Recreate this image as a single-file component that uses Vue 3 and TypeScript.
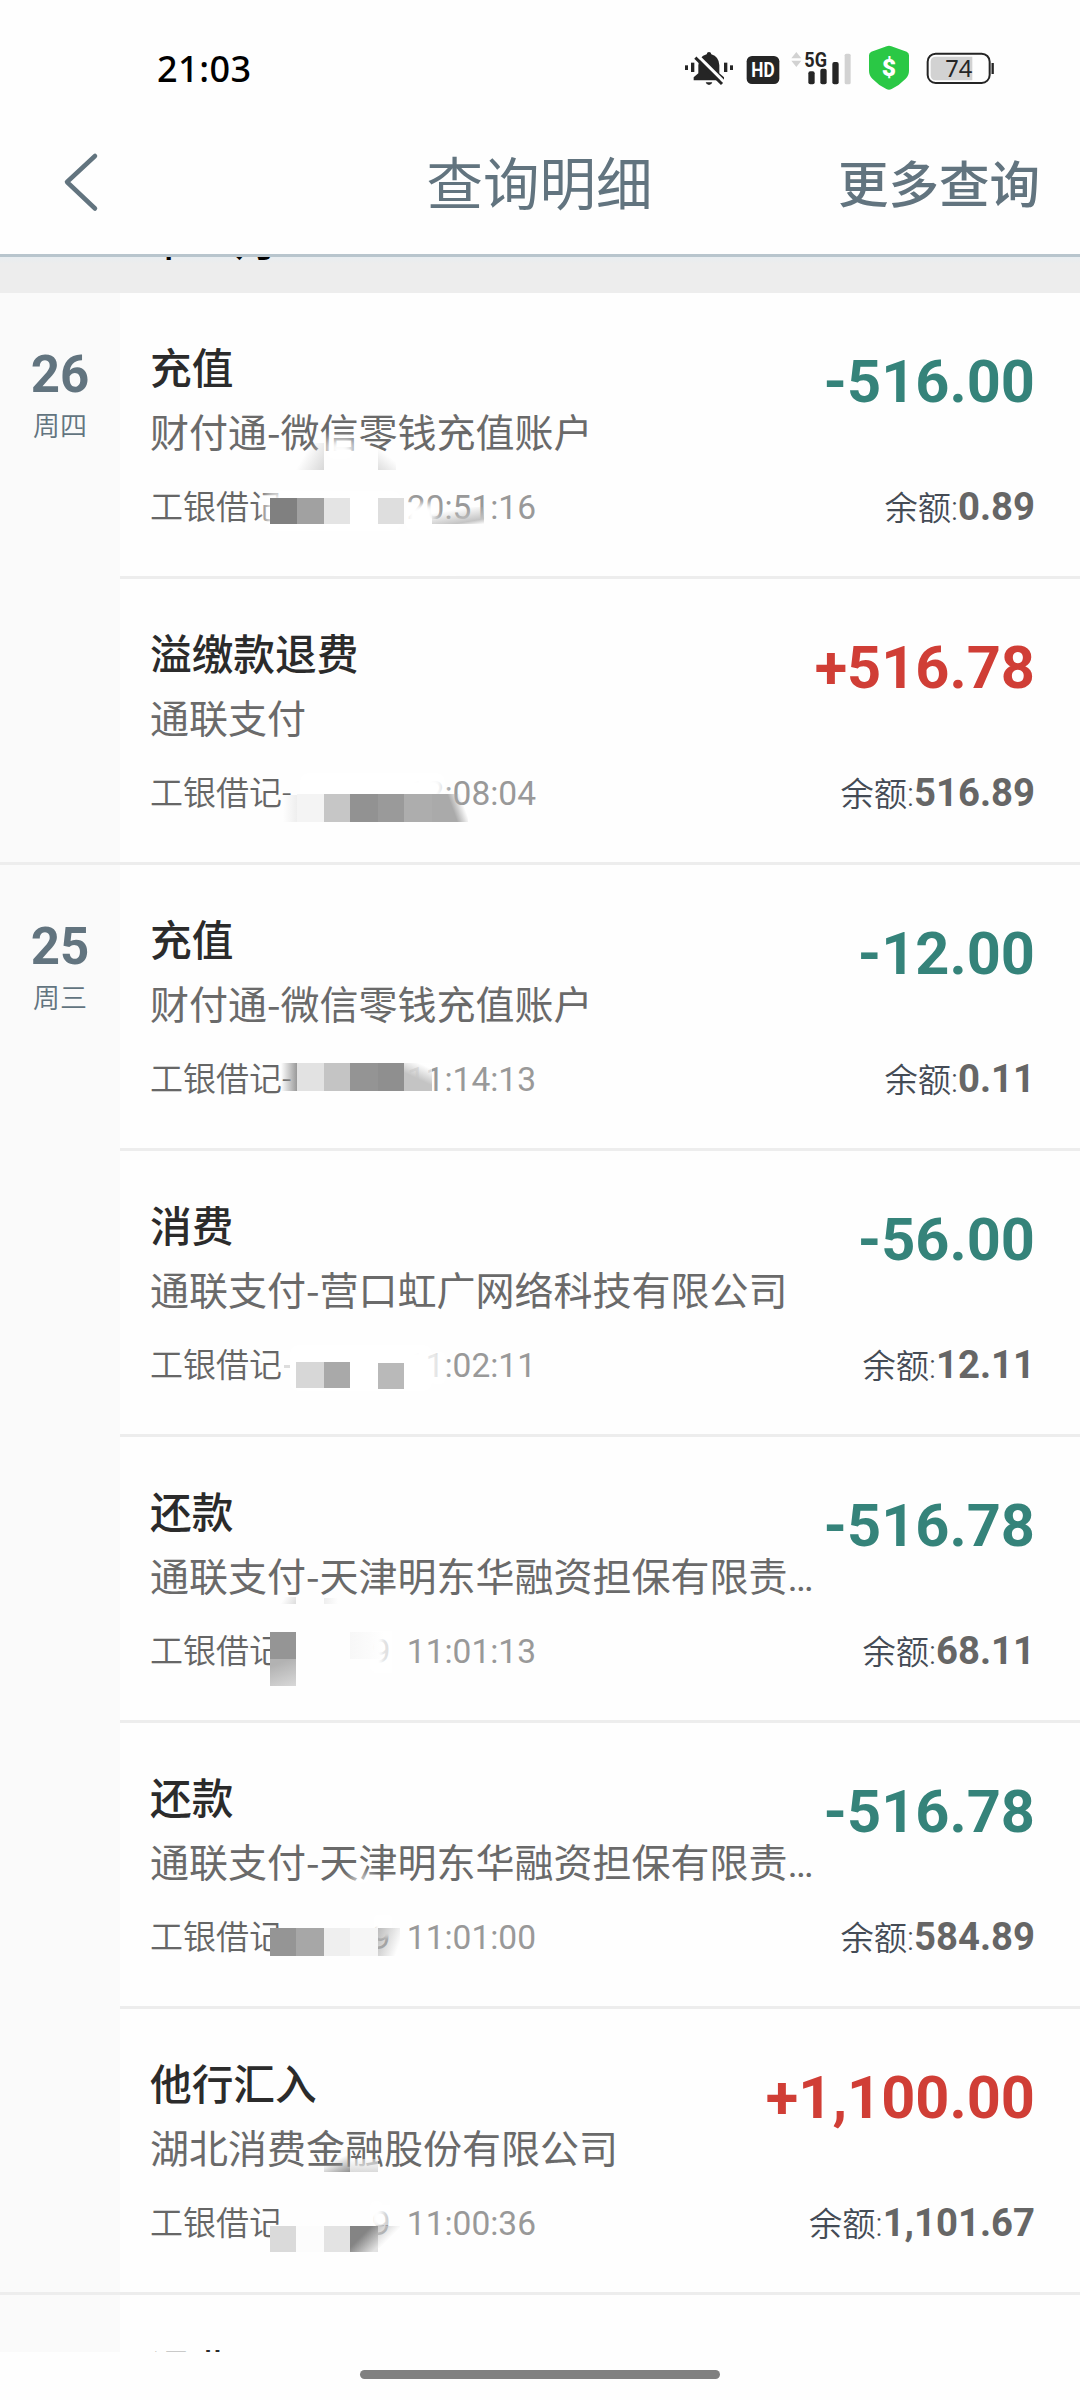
<script setup lang="ts">
interface Patch {
  x: number
  y: number
  w: number
  h: number
  bg: string
  blur?: number
}
interface Entry {
  title: string
  desc: string
  cut?: boolean
  card: string
  time: string
  amount: string
  balance: string
  patches: Patch[]
}
interface Day {
  day: string
  week: string
  entries: Entry[]
}

const days: Day[] = [
  {
    day: '26',
    week: '周四',
    entries: [
      {
        title: '充值', desc: '财付通-微信零钱充值账户', card: '工银借记', time: '20:51:16',
        amount: '-516.00', balance: '0.89',
        patches: [
          { x: 266, y: 198, w: 136, h: 40, bg: '#fff', blur: 6 },
          { x: 326, y: 146, w: 28, h: 20, bg: '#fff', blur: 5 },
          { x: 406, y: 211, w: 30, h: 26, bg: '#fff', blur: 3 },
          { x: 270, y: 205, w: 27, h: 26, bg: '#808080' },
          { x: 297, y: 205, w: 27, h: 26, bg: '#a1a1a1' },
          { x: 324, y: 205, w: 26, h: 26, bg: '#e4e4e4' },
          { x: 378, y: 205, w: 26, h: 26, bg: '#dedede' },
          { x: 432, y: 214, w: 52, h: 17, bg: 'linear-gradient(170deg, transparent 25%, #c4c4c4 80%, transparent 100%)' },
          { x: 296, y: 150, w: 28, h: 27, bg: 'linear-gradient(120deg, transparent 35%, #d8d8d8)' },
          { x: 378, y: 157, w: 18, h: 20, bg: 'linear-gradient(220deg, transparent 35%, #dedede)' },
          { x: 320, y: 280, w: 150, h: 8, bg: '#fff', blur: 6 },
        ],
      },
      {
        title: '溢缴款退费', desc: '通联支付', card: '工银借记-', time: '12:08:04',
        amount: '+516.78', balance: '516.89',
        patches: [
          { x: 300, y: 194, w: 145, h: 46, bg: '#fff', blur: 5 },
          { x: 283, y: 216, w: 14, h: 27, bg: 'linear-gradient(90deg, transparent, #eee)' },
          { x: 297, y: 215, w: 27, h: 28, bg: '#f4f4f4' },
          { x: 324, y: 215, w: 26, h: 28, bg: '#c6c6c6' },
          { x: 350, y: 215, w: 28, h: 28, bg: '#929292' },
          { x: 378, y: 215, w: 26, h: 28, bg: '#9a9a9a' },
          { x: 404, y: 215, w: 28, h: 28, bg: '#adadad' },
          { x: 432, y: 215, w: 36, h: 28, bg: 'linear-gradient(70deg, #aaa 55%, transparent 82%)' },
        ],
      },
    ],
  },
  {
    day: '25',
    week: '周三',
    entries: [
      {
        title: '充值', desc: '财付通-微信零钱充值账户', card: '工银借记-', time: '11:14:13',
        amount: '-12.00', balance: '0.11',
        patches: [
          { x: 281, y: 198, w: 16, h: 28, bg: 'linear-gradient(90deg, transparent, #999)' },
          { x: 297, y: 198, w: 27, h: 28, bg: '#e2e2e2' },
          { x: 324, y: 198, w: 26, h: 28, bg: '#c4c4c4' },
          { x: 350, y: 198, w: 28, h: 28, bg: '#949494' },
          { x: 378, y: 198, w: 26, h: 28, bg: '#8f8f8f' },
          { x: 404, y: 198, w: 28, h: 28, bg: 'linear-gradient(25deg, #c4c4c4 45%, rgba(255,255,255,.7) 85%)' },
        ],
      },
      {
        title: '消费', desc: '通联支付-营口虹广网络科技有限公司', card: '工银借记', time: '11:02:11',
        amount: '-56.00', balance: '12.11',
        patches: [
          { x: 290, y: 194, w: 142, h: 46, bg: '#fff', blur: 5 },
          { x: 430, y: 200, w: 16, h: 34, bg: 'rgba(255,255,255,.7)', blur: 2 },
          { x: 284, y: 214, w: 6, h: 3, bg: '#ddd' },
          { x: 296, y: 211, w: 28, h: 26, bg: '#d7d7d7' },
          { x: 324, y: 211, w: 26, h: 26, bg: '#a9a9a9' },
          { x: 378, y: 212, w: 26, h: 26, bg: '#b9b9b9' },
        ],
      },
      {
        title: '还款', desc: '通联支付-天津明东华融资担保有限责', cut: true, card: '工银借记', time: '9 11:01:13',
        amount: '-516.78', balance: '68.11',
        patches: [
          { x: 370, y: 194, w: 12, h: 40, bg: '#fff', blur: 2 },
          { x: 374, y: 194, w: 18, h: 42, bg: 'rgba(255,255,255,.7)' },
          { x: 350, y: 195, w: 34, h: 27, bg: 'linear-gradient(90deg, #f7f7f7, transparent)' },
          { x: 270, y: 195, w: 26, h: 27, bg: '#959595' },
          { x: 270, y: 222, w: 26, h: 27, bg: 'linear-gradient(160deg, #b2b2b2 20%, #d8d8d8)' },
          { x: 276, y: 160, w: 20, h: 7, bg: 'linear-gradient(120deg, transparent 35%, #ddd)' },
          { x: 324, y: 161, w: 14, h: 6, bg: 'linear-gradient(90deg, #eee, transparent)' },
        ],
      },
      {
        title: '还款', desc: '通联支付-天津明东华融资担保有限责', cut: true, card: '工银借记', time: '9 11:01:00',
        amount: '-516.78', balance: '584.89',
        patches: [
          { x: 374, y: 192, w: 18, h: 22, bg: '#fff', blur: 2 },
          { x: 350, y: 150, w: 24, h: 14, bg: 'rgba(255,255,255,.6)', blur: 4 },
          { x: 270, y: 205, w: 26, h: 28, bg: '#959595' },
          { x: 296, y: 205, w: 28, h: 28, bg: '#a7a7a7' },
          { x: 324, y: 205, w: 26, h: 28, bg: '#efefef' },
          { x: 350, y: 205, w: 28, h: 28, bg: '#f6f6f6' },
          { x: 378, y: 205, w: 22, h: 28, bg: 'linear-gradient(110deg, rgba(175,175,175,.85), transparent 85%)' },
        ],
      },
      {
        title: '他行汇入', desc: '湖北消费金融股份有限公司', card: '工银借记', time: '9 11:00:36',
        amount: '+1,100.00', balance: '1,101.67',
        patches: [
          { x: 370, y: 192, w: 13, h: 26, bg: '#fff', blur: 3 },
          { x: 374, y: 196, w: 16, h: 20, bg: 'rgba(255,255,255,.5)' },
          { x: 270, y: 217, w: 26, h: 26, bg: '#dadada' },
          { x: 296, y: 217, w: 28, h: 26, bg: '#fcfcfc' },
          { x: 324, y: 217, w: 26, h: 26, bg: '#e3e3e3' },
          { x: 350, y: 217, w: 28, h: 26, bg: 'linear-gradient(135deg, #848484 40%, #e2e2e2 90%)' },
          { x: 378, y: 217, w: 22, h: 22, bg: 'linear-gradient(135deg, #c8c8c8, transparent 55%)' },
          { x: 324, y: 146, w: 26, h: 17, bg: 'linear-gradient(155deg, transparent 35%, #909090)' },
          { x: 350, y: 150, w: 28, h: 13, bg: 'linear-gradient(180deg, rgba(255,255,255,.5), #dadada)' },
        ],
      },
    ],
  },
]

const box = (p: Patch) => ({
  left: p.x - 120 + 'px',
  top: p.y + 'px',
  width: p.w + 'px',
  height: p.h + 'px',
  background: p.bg,
  filter: p.blur ? `blur(${p.blur}px)` : 'none',
})
</script>

<template>
  <div class="screen">
    <div class="status">
      <span class="clock">21:03</span>
      <div class="icons">
        <svg width="60" height="50" viewBox="72 39 180 150">
          <g fill="#252525">
            <rect x="75" y="106" width="9" height="14" /><rect x="93" y="98" width="10" height="28" />
            <rect x="192" y="98" width="10" height="28" /><rect x="210" y="106" width="9" height="14" />
            <path d="M140 73 Q141 66 147 66 Q153 66 154 73 Q177 80 178 106 V130 L192 142 V151 H101 V142 L115 130 V106 Q116 80 140 73Z" />
            <path d="M137 157 H157 Q155 165 147 165 Q139 165 137 157Z" />
          </g>
          <path d="M112 76 L194 158" stroke="#fff" stroke-width="10" />
          <path d="M106 83 L186 162" stroke="#252525" stroke-width="9" />
        </svg>
        <svg width="46" height="50" viewBox="252 39 138 150">
          <rect x="260" y="78" width="98" height="84" rx="16" fill="#252525" />
          <text x="309" y="142" text-anchor="middle" textLength="70" lengthAdjust="spacingAndGlyphs" font-family="Roboto, sans-serif" font-weight="700" font-size="60" fill="#fff">HD</text>
        </svg>
        <svg width="74" height="50" viewBox="390 39 222 150">
          <path d="M409 66 L424 85 H394Z M409 111 L424 92 H394Z" fill="#d2d2d2" />
          <g fill="#252525">
            <rect x="445" y="124" width="19" height="39" rx="6" /><rect x="481" y="116" width="19" height="47" rx="6" />
            <rect x="517" y="96" width="19" height="67" rx="6" />
          </g>
          <rect x="554" y="71" width="18" height="92" rx="5" fill="#d2d2d2" />
          <text x="433" y="110" textLength="68" lengthAdjust="spacingAndGlyphs" font-family="Roboto, sans-serif" font-weight="700" font-size="60" fill="#252525" stroke="#fff" stroke-width="6" paint-order="stroke">5G</text>
        </svg>
        <svg width="56" height="50" viewBox="612 39 168 150">
          <path d="M680 49 Q687 46 694 49 L740 65 Q747 68 747 76 V122 Q747 136 737 146 Q718 166 695 177 Q687 181 679 177 Q656 166 637 146 Q627 136 627 122 V76 Q627 68 634 65Z" fill="#2ac845" />
          <text x="687" y="139" text-anchor="middle" font-family="Roboto, sans-serif" font-weight="900" font-size="74" fill="#fff">$</text>
        </svg>
        <svg width="80" height="50" viewBox="780 39 240 150">
          <path d="M828 80 H937 V151 H828 Q812 151 812 136 V95 Q812 80 828 80Z" fill="#d2d2d2" />
          <rect x="803" y="71" width="186" height="88" rx="24" fill="none" stroke="#252525" stroke-width="6" />
          <path d="M998 99 V132" stroke="#252525" stroke-width="7" />
          <text x="896" y="140" text-anchor="middle" font-family="'Noto Sans', sans-serif" font-size="71" fill="#252525">74</text>
        </svg>
      </div>
    </div>

    <header class="nav">
      <svg class="back" width="40" height="62" viewBox="0 0 40 62">
        <path d="M33 5 L5 31 L33 57.500" fill="none" stroke="#62747f" stroke-width="4.500" stroke-linecap="round" stroke-linejoin="round" />
      </svg>
      <h1>查询明细</h1>
      <span class="more">更多查询</span>
    </header>

    <div class="list">
      <div class="month"><span>2026年02月</span></div>
      <section v-for="d in days" :key="d.day" class="group">
        <aside class="date">
          <b>{{ d.day }}</b>
          <span>{{ d.week }}</span>
        </aside>
        <div class="entries">
          <article v-for="(e, i) in d.entries" :key="i" class="entry">
            <div class="main">
              <div class="title">{{ e.title }}</div>
              <div class="desc">{{ e.desc }}<i v-if="e.cut">…</i></div>
              <div class="meta"><span class="card">{{ e.card }}</span><span class="time">{{ e.time }}</span></div>
            </div>
            <div class="side">
              <div class="amount" :class="{ income: e.amount[0] === '+' }">{{ e.amount }}</div>
              <div class="balance">余额:<b>{{ e.balance }}</b></div>
            </div>
            <div v-for="(p, j) in e.patches" :key="j" class="patch" :style="box(p)"></div>
          </article>
        </div>
      </section>
      <section class="group">
        <aside class="date"></aside>
        <div class="entries"><article class="entry"><div class="main"><div class="title">退费</div></div></article></div>
      </section>
    </div>

    <footer class="home"><div></div></footer>
  </div>
</template>

<style>
body {
  margin: 0;
  background: #fff;
}
</style>

<style scoped>
.screen {
  width: 1080px;
  height: 2400px;
  display: flex;
  flex-direction: column;
  overflow: hidden;
  background: #fefefe;
  font-family: Roboto, "Noto Sans CJK SC", sans-serif;
}
.status {
  flex: none;
  height: 114px;
  display: flex;
  justify-content: space-between;
  padding: 0 80px 0 157px;
}
.clock {
  padding-top: 44px;
  font: 500 36px/50px "Noto Sans", sans-serif;
  letter-spacing: 0.500px;
  color: #000;
}
.icons {
  display: flex;
  padding-top: 43px;
}
.icons svg {
  display: block;
}
.nav {
  flex: none;
  box-sizing: border-box;
  height: 143px;
  border-bottom: 3px solid #b8c5cd;
  display: grid;
  grid-template-columns: 1fr auto 1fr;
  align-items: center;
  padding: 0 40px 0 62px;
  color: #62747f;
  position: relative;
  z-index: 2;
  background: #fefefe;
}
.back {
  display: block;
  margin-top: -5px;
}
.nav h1 {
  margin: 4px 0 0 -23px;
  font-size: 56.500px;
  font-weight: 400;
  line-height: 80px;
}
.more {
  margin-top: 4px;
  justify-self: end;
  font-size: 50.500px;
  font-weight: 500;
  line-height: 80px;
}
.list {
  flex: none;
  height: 2095px;
  overflow: hidden;
}
.month {
  height: 36px;
  background: linear-gradient(180deg, #e8edf0 0, #ededed 7px);
  font-size: 42px;
  font-weight: 500;
  line-height: 50px;
  color: #000;
  padding-left: 50px;
}
.month span {
  display: block;
  transform: translateY(-40px);
}
.group {
  display: flex;
  border-bottom: 3px solid #ededed;
}
.date {
  width: 120px;
  background: #fafafa;
  display: flex;
  flex-direction: column;
  align-items: center;
  color: #62747f;
}
.date b {
  font-size: 51px;
  line-height: 60px;
  margin-top: 52px;
}
.date span {
  font-size: 27px;
  line-height: 40px;
  margin-top: 2px;
  font-weight: 350;
}
.entries {
  flex: 1;
  min-width: 0;
}
.entry {
  height: 283px;
  position: relative;
  display: flex;
  justify-content: space-between;
  padding: 0 45px 0 30px;
}
.entry + .entry {
  border-top: 3px solid #ededed;
}
.main {
  white-space: nowrap;
  width: 520px;
}
.title {
  margin-top: 47px;
  height: 60px;
  font-size: 41.700px;
  font-weight: 500;
  line-height: 60px;
  color: #2b2b2b;
}
.desc {
  height: 60px;
  font: 400 39px/60px "Noto Sans CJK SC", sans-serif;
  color: #6a6a6a;
}
.desc i {
  font-family: Roboto, sans-serif;
  font-style: normal;
}
.meta {
  margin-top: 23px;
  width: 386px;
  display: flex;
  justify-content: space-between;
  font-size: 33px;
  line-height: 50px;
  color: #666;
  font-weight: 350;
}
.time {
  color: #999;
  font-weight: 400;
  font-size: 33.500px;
  white-space: pre;
  word-spacing: 8px;
}
.side {
  text-align: right;
  white-space: nowrap;
}
.amount {
  margin-top: 54px;
  height: 70px;
  font-size: 59.500px;
  line-height: 70px;
  font-weight: 700;
  color: #35837a;
}
.amount.income {
  color: #d03e36;
}
.balance {
  margin-top: 65px;
  font-size: 33.300px;
  line-height: 50px;
  font-weight: 350;
  color: #444b55;
}
.balance b {
  font-size: 38.300px;
  font-weight: 700;
  color: #666;
}
.patch {
  position: absolute;
}
.home {
  flex: 1;
  background: #fefefe;
  display: flex;
  justify-content: center;
}
.home div {
  width: 360px;
  height: 9px;
  margin-top: 18px;
  border-radius: 5px;
  background: #808080;
}
</style>
